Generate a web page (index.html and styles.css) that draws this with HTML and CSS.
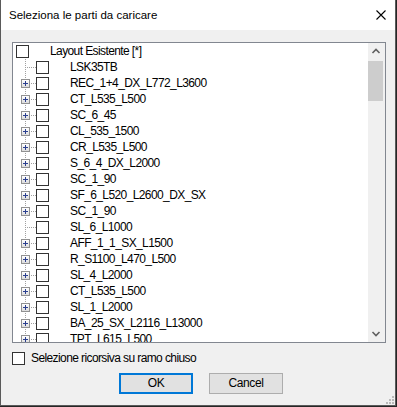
FILE: index.html
```html
<!DOCTYPE html>
<html>
<head>
<meta charset="utf-8">
<link rel="stylesheet" href="styles.css">
</head>
<body>
<div class="window">
  <div class="titlebar">
    <span class="title">Seleziona le parti da caricare</span>
    <svg class="close" width="10" height="10" viewBox="0 0 10 10"><path d="M0.5 0.5L9.5 9.5M9.5 0.5L0.5 9.5" stroke="#000" stroke-width="1.1" fill="none"/></svg>
  </div>
  <div class="client">
    <div class="tree">
      <div class="items">
        <div class="row root"><span class="cb"></span><span class="label">Layout Esistente [*]</span></div>
        <div class="row"><span class="gutter"></span><span class="cb"></span><span class="label">LSK35TB</span></div>
        <div class="row"><span class="gutter"><span class="plus"></span></span><span class="cb"></span><span class="label">REC_1+4_DX_L772_L3600</span></div>
        <div class="row"><span class="gutter"><span class="plus"></span></span><span class="cb"></span><span class="label">CT_L535_L500</span></div>
        <div class="row"><span class="gutter"><span class="plus"></span></span><span class="cb"></span><span class="label">SC_6_45</span></div>
        <div class="row"><span class="gutter"><span class="plus"></span></span><span class="cb"></span><span class="label">CL_535_1500</span></div>
        <div class="row"><span class="gutter"><span class="plus"></span></span><span class="cb"></span><span class="label">CR_L535_L500</span></div>
        <div class="row"><span class="gutter"><span class="plus"></span></span><span class="cb"></span><span class="label">S_6_4_DX_L2000</span></div>
        <div class="row"><span class="gutter"><span class="plus"></span></span><span class="cb"></span><span class="label">SC_1_90</span></div>
        <div class="row"><span class="gutter"><span class="plus"></span></span><span class="cb"></span><span class="label">SF_6_L520_L2600_DX_SX</span></div>
        <div class="row"><span class="gutter"><span class="plus"></span></span><span class="cb"></span><span class="label">SC_1_90</span></div>
        <div class="row"><span class="gutter"></span><span class="cb"></span><span class="label">SL_6_L1000</span></div>
        <div class="row"><span class="gutter"><span class="plus"></span></span><span class="cb"></span><span class="label">AFF_1_1_SX_L1500</span></div>
        <div class="row"><span class="gutter"><span class="plus"></span></span><span class="cb"></span><span class="label">R_S1100_L470_L500</span></div>
        <div class="row"><span class="gutter"><span class="plus"></span></span><span class="cb"></span><span class="label">SL_4_L2000</span></div>
        <div class="row"><span class="gutter"><span class="plus"></span></span><span class="cb"></span><span class="label">CT_L535_L500</span></div>
        <div class="row"><span class="gutter"><span class="plus"></span></span><span class="cb"></span><span class="label">SL_1_L2000</span></div>
        <div class="row"><span class="gutter"><span class="plus"></span></span><span class="cb"></span><span class="label">BA_25_SX_L2116_L13000</span></div>
        <div class="row"><span class="gutter"><span class="plus"></span></span><span class="cb"></span><span class="label">TPT_L615_L500</span></div>
      </div>
      <div class="vscroll">
        <div class="sbtn"><svg width="17" height="17" viewBox="0 0 17 17"><path d="M4.5 10L8 6.5L11.5 10" stroke="#606060" stroke-width="1.6" fill="none"/></svg></div>
        <div class="track"><div class="thumb"></div></div>
        <div class="sbtn"><svg width="17" height="17" viewBox="0 0 17 17"><path d="M4.5 7L8 10.5L11.5 7" stroke="#606060" stroke-width="1.6" fill="none"/></svg></div>
      </div>
    </div>
    <div class="recursive"><span class="cb"></span><span class="rlabel">Selezione ricorsiva su ramo chiuso</span></div>
    <div class="buttons">
      <button class="btn default">OK</button>
      <button class="btn">Cancel</button>
    </div>
  </div>
  <svg class="grip" width="8" height="8" viewBox="0 0 8 8" fill="#bababa">
    <rect x="6" y="0" width="2" height="2"/>
    <rect x="3" y="3" width="2" height="2"/><rect x="6" y="3" width="2" height="2"/>
    <rect x="0" y="6" width="2" height="2"/><rect x="3" y="6" width="2" height="2"/><rect x="6" y="6" width="2" height="2"/>
  </svg>
</div>
</body>
</html>
```
FILE: styles.css
```css
html, body {
  margin: 0;
  padding: 0;
}
body {
  background: #262626;
  width: 397px;
  height: 407px;
  overflow: hidden;
}
.window {
  position: relative;
  width: 396px;
  height: 406px;
  box-sizing: border-box;
  border: 1px solid #5a5a5a;
  border-top: 0;
  background: #f0f0f0;
  display: flex;
  flex-direction: column;
}
.titlebar {
  height: 30px;
  flex: none;
  background: #fff;
  display: flex;
  align-items: center;
  justify-content: space-between;
  padding: 0 9px 0 8px;
}
.title {
  font: 11.5px/30px "Liberation Sans", Arial, sans-serif;
  color: #000;
}
.close {
  display: block;
}
.client {
  padding: 12px 10px 0 11px;
  display: flex;
  flex-direction: column;
}
.tree {
  width: 374px;
  height: 301px;
  box-sizing: border-box;
  border: 1px solid #828790;
  background: #fff;
  display: flex;
}
.items {
  flex: 1;
  overflow: hidden;
}
.row {
  display: flex;
  align-items: flex-start;
  height: 16px;
  font: 12px/17px "Liberation Sans", Arial, sans-serif;
  letter-spacing: -0.6px;
  color: #000;
  white-space: nowrap;
}
.root {
  padding-left: 3px;
}
.cb {
  flex: none;
  width: 13px;
  height: 13px;
  box-sizing: border-box;
  border: 1px solid #333;
  background: #fff;
  margin-top: 2px;
}
.label {
  margin-left: 21px;
}
.gutter {
  flex: none;
  width: 23px;
  height: 16px;
  background:
    repeating-linear-gradient(to bottom, #a0a0a0 0 1px, transparent 1px 2px) 12px 0 / 1px 16px no-repeat,
    repeating-linear-gradient(to right, #a0a0a0 0 1px, transparent 1px 2px) 14px 8px / 9px 1px no-repeat;
}
.plus {
  display: block;
  width: 9px;
  height: 9px;
  box-sizing: border-box;
  margin: 4px 0 0 8px;
  border: 1px solid #919191;
  background:
    linear-gradient(#2b3f8f, #2b3f8f) center / 5px 1px no-repeat,
    linear-gradient(#2b3f8f, #2b3f8f) center / 1px 5px no-repeat,
    linear-gradient(#ffffff, #dcdcdc);
}
.vscroll {
  flex: none;
  width: 17px;
  background: #f0f0f0;
  display: flex;
  flex-direction: column;
}
.sbtn {
  flex: none;
  height: 17px;
}
.sbtn svg {
  display: block;
}
.track {
  flex: 1;
}
.thumb {
  margin: 1px 2px 0 0;
  height: 40px;
  background: #cdcdcd;
}
.recursive {
  margin-top: 9px;
  display: flex;
  align-items: center;
  height: 13px;
  font: 12px/13px "Liberation Sans", Arial, sans-serif;
  letter-spacing: -0.6px;
  color: #000;
}
.recursive .cb {
  margin-top: 0;
}
.rlabel {
  margin-left: 6px;
}
.buttons {
  margin-top: 8px;
  padding-left: 107px;
  display: flex;
  gap: 16px;
}
.btn {
  width: 74px;
  height: 21px;
  box-sizing: border-box;
  padding: 0;
  margin: 0;
  background: #e1e1e1;
  border: 1px solid #adadad;
  font: 12px/17px "Liberation Sans", Arial, sans-serif;
  letter-spacing: -0.4px;
  color: #000;
}
.btn.default {
  border: 2px solid #0078d7;
}
.grip {
  position: absolute;
  right: 1px;
  bottom: 1px;
  display: block;
}
```
